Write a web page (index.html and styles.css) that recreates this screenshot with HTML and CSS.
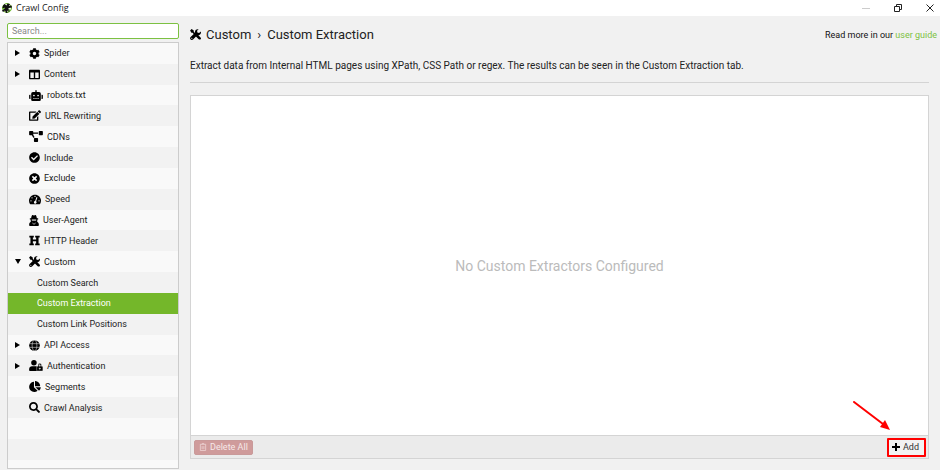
FILE: index.html
```
<!DOCTYPE html>
<html lang="en">
<head>
    <meta charset="UTF-8">
    <meta name="viewport" content="width=device-width, initial-scale=1.0">
    <title>Crawl Config</title>
    <link rel="stylesheet" href="styles.css">
</head>
<body>
    <svg class="sprite" aria-hidden="true">
        <symbol id="tools" viewBox="0 0 512 512">
            <path d="M5 75L75 5l100 70v55l115 110-60 60L120 175H65z"/>
            <path d="M300 280l60-20 130 130c28 28 28 60 5 85s-65 25-90 0L275 345z"/>
            <path d="M503 115c22 70-8 135-68 160-30 14-60 14-85 8L140 490c-32 30-80 30-112 0s-30-80 2-112l205-205c-12-55 5-105 40-140C315 8 360 0 404 12l-75 75 14 80 80 14z"/>
            <circle class="hole" cx="84" cy="432" r="26"/>
        </symbol>
    </svg>

    <div class="window">
        <header class="titlebar">
            <svg class="logo" viewBox="0 0 20 20">
                <circle cx="10" cy="10" r="9" fill="#eef6e6" stroke="#6cb52d" stroke-width="2"/>
                <path d="M2 5l3-3 4 3 2-4 5 1-2 4 5-1 1 4-6 1-2 2 4 2-2 4-4-3 1 5h-3l-2-5-4 3-2-3 5-4-4-1z" fill="#111"/>
                <path d="M2 12l4-2M12 17l4-4" stroke="#6cb52d" stroke-width="2"/>
            </svg>
            <span class="title">Crawl Config</span>
            <div class="window-controls">
                <button aria-label="Minimize"><svg viewBox="0 0 8 8"><path d="M0 4.500h8" stroke="#ccc"/></svg></button>
                <button aria-label="Restore"><svg viewBox="0 0 8 8"><path d="M.5 2.500h5v5h-5zM2.500 2.500v-2h5v5h-2" stroke="#222"/></svg></button>
                <button aria-label="Close"><svg viewBox="0 0 8 8"><path d="M.5.5l7 7m0-7l-7 7" stroke="#222"/></svg></button>
            </div>
        </header>

        <div class="content">
            <aside class="sidebar">
                <input class="search" type="text" placeholder="Search..." aria-label="Search">
                <ul class="tree">
                    <li>
                        <span class="arrow"></span>
                        <svg class="icon" viewBox="0 0 512 512"><path d="M487.4 315.7l-42.6-24.6c4.3-23.2 4.3-47 0-70.2l42.6-24.6c4.9-2.8 7.1-8.6 5.5-14-11.1-35.6-30-67.8-54.7-94.6-3.8-4.1-10-5.1-14.8-2.3L380.8 110c-17.9-15.4-38.5-27.3-60.8-35.1V25.8c0-5.6-3.9-10.5-9.4-11.7-36.7-8.2-74.3-7.8-109.2 0-5.5 1.2-9.4 6.1-9.4 11.7V75c-22.2 7.9-42.8 19.8-60.8 35.1L88.7 85.5c-4.9-2.8-11-1.9-14.8 2.3-24.7 26.7-43.6 58.9-54.7 94.6-1.7 5.4.6 11.2 5.5 14L67.3 221c-4.3 23.2-4.3 47 0 70.2l-42.6 24.6c-4.9 2.8-7.1 8.6-5.5 14 11.1 35.6 30 67.8 54.7 94.6 3.8 4.1 10 5.1 14.8 2.3l42.6-24.6c17.9 15.4 38.5 27.3 60.8 35.1v49.2c0 5.6 3.9 10.5 9.4 11.7 36.7 8.2 74.3 7.8 109.2 0 5.5-1.2 9.4-6.1 9.4-11.7v-49.2c22.2-7.9 42.8-19.8 60.8-35.1l42.6 24.6c4.9 2.8 11 1.9 14.8-2.3 24.7-26.7 43.6-58.9 54.7-94.6 1.5-5.5-.7-11.3-5.6-14.1zM256 336c-44.1 0-80-35.9-80-80s35.9-80 80-80 80 35.9 80 80-35.9 80-80 80z"/></svg>
                        <span>Spider</span>
                    </li>
                    <li>
                        <span class="arrow"></span>
                        <svg class="icon" viewBox="0 0 512 512"><path d="M464 32H48C21.500 32 0 53.500 0 80v352c0 26.500 21.500 48 48 48h416c26.500 0 48-21.500 48-48V80c0-26.500-21.500-48-48-48zM224 416H64V160h160v256zm224 0H288V160h160v256z"/></svg>
                        <span>Content</span>
                    </li>
                    <li>
                        <svg class="icon wide" viewBox="0 0 640 512"><path d="M32,224H64V416H32A32,32,0,0,1,0,384V256A32,32,0,0,1,32,224Zm512-48V448a64,64,0,0,1-64,64H160a64,64,0,0,1-64-64V176a80,80,0,0,1,80-80H288V32a32,32,0,0,1,64,0V96H464A80,80,0,0,1,544,176ZM264,256a40,40,0,1,0-40,40A40,40,0,0,0,264,256Zm-8,128H192v32h64Zm96,0H288v32h64ZM456,256a40,40,0,1,0-40,40A40,40,0,0,0,456,256Zm-8,128H384v32h64ZM640,256V384a32,32,0,0,1-32,32H576V224h32A32,32,0,0,1,640,256Z"/></svg>
                        <span>robots.txt</span>
                    </li>
                    <li>
                        <svg class="icon medium" viewBox="0 0 576 512"><path d="M402.6 83.2l90.2 90.2c3.8 3.8 3.8 10 0 13.8L274.4 405.6l-92.8 10.3c-12.4 1.4-22.9-9.1-21.5-21.5l10.3-92.8L388.8 83.2c3.8-3.8 10-3.8 13.8 0zm162-22.9l-48.8-48.8c-15.2-15.2-39.9-15.2-55.2 0l-35.4 35.4c-3.8 3.8-3.8 10 0 13.8l90.2 90.2c3.8 3.8 10 3.8 13.8 0l35.4-35.4c15.2-15.3 15.2-40 0-55.2zM384 346.2V448H64V128h229.8c3.2 0 6.2-1.3 8.5-3.5l40-40c7.6-7.6 2.2-20.5-8.5-20.5H48C21.5 64 0 85.5 0 112v352c0 26.5 21.5 48 48 48h352c26.5 0 48-21.5 48-48V306.2c0-10.7-12.9-16-20.5-8.5l-40 40c-2.2 2.3-3.5 5.3-3.5 8.5z"/></svg>
                        <span>URL Rewriting</span>
                    </li>
                    <li>
                        <svg class="icon wide" viewBox="0 0 640 512"><path d="M384 320H256c-17.67 0-32 14.33-32 32v128c0 17.67 14.33 32 32 32h128c17.67 0 32-14.33 32-32V352c0-17.67-14.33-32-32-32zM192 32c0-17.67-14.33-32-32-32H32C14.33 0 0 14.33 0 32v128c0 17.67 14.33 32 32 32h95.72l73.16 128.04C211.98 300.98 232.4 288 256 288h.28L192 175.51V128h224V64H192V32zM608 0H480c-17.67 0-32 14.33-32 32v128c0 17.67 14.33 32 32 32h128c17.67 0 32-14.33 32-32V32c0-17.67-14.33-32-32-32z"/></svg>
                        <span>CDNs</span>
                    </li>
                    <li>
                        <svg class="icon" viewBox="0 0 512 512"><path d="M504 256c0 137-111 248-248 248S8 393 8 256 119 8 256 8s248 111 248 248zM227.300 387.300l184-184c6.200-6.200 6.200-16.400 0-22.600l-22.600-22.600c-6.200-6.200-16.400-6.200-22.600 0L216 308.100l-70-70c-6.200-6.200-16.400-6.200-22.600 0l-22.600 22.600c-6.200 6.200-6.200 16.400 0 22.600l104 104c6.200 6.200 16.400 6.200 22.500 0z"/></svg>
                        <span>Include</span>
                    </li>
                    <li>
                        <svg class="icon" viewBox="0 0 512 512"><path d="M256 8C119 8 8 119 8 256s111 248 248 248 248-111 248-248S393 8 256 8zm121.6 313.1c4.700 4.700 4.700 12.300 0 17L338 377.600c-4.700 4.700-12.300 4.700-17 0L256 312l-65.100 65.600c-4.700 4.700-12.300 4.700-17 0L134.400 338c-4.700-4.700-4.700-12.300 0-17l65.600-65-65.600-65.100c-4.700-4.700-4.700-12.300 0-17l39.600-39.600c4.700-4.700 12.300-4.700 17 0l65 65.700 65.100-65.600c4.700-4.700 12.300-4.700 17 0l39.600 39.600c4.700 4.700 4.700 12.300 0 17L312 256l65.600 65.100z"/></svg>
                        <span>Exclude</span>
                    </li>
                    <li>
                        <svg class="icon medium" viewBox="0 0 576 512">
                            <path d="M288 32C129 32 0 161 0 320c0 53 14 102 39 145 6 9 16 15 27 15h444c11 0 21-6 27-15 25-43 39-92 39-145C576 161 447 32 288 32z"/>
                            <g class="hole"><circle cx="288" cy="110" r="30"/><circle cx="145" cy="175" r="30"/><circle cx="95" cy="320" r="30"/><circle cx="481" cy="320" r="30"/><path d="M360 140l45 15-65 190a64 64 0 1 1-45-15z"/></g>
                        </svg>
                        <span>Speed</span>
                    </li>
                    <li>
                        <svg class="icon narrow" viewBox="0 0 448 512">
                            <path d="M30 150h60c10-60 30-125 56-145 20-9 52 16 78 16S286-4 302 5c26 20 46 85 56 145h60v60h-40v80l-10 20c46 28 80 58 80 112v58c0 18-14 32-32 32H32c-18 0-32-14-32-32v-58c0-54 34-84 80-112l-10-20v-80H30z"/>
                            <path class="hole" d="M120 205h208v40c-30 28-75 24-104-5-29 29-74 33-104 5zM150 350l50 30-10 80zM298 350l-50 30 10 80z"/>
                        </svg>
                        <span>User-Agent</span>
                    </li>
                    <li>
                        <svg class="icon" viewBox="0 0 512 512"><path d="M16 40h208v76h-44v96h152v-96h-44V40h208v76h-52v280h52v76H288v-76h44V296H180v100h44v76H16v-76h52V116H16z"/></svg>
                        <span>HTTP Header</span>
                    </li>
                    <li>
                        <span class="arrow open"></span>
                        <svg class="icon"><use href="#tools"/></svg>
                        <span>Custom</span>
                    </li>
                    <li class="child">Custom Search</li>
                    <li class="child selected">Custom Extraction</li>
                    <li class="child">Custom Link Positions</li>
                    <li>
                        <span class="arrow"></span>
                        <svg class="icon" viewBox="0 0 512 512">
                            <circle cx="256" cy="256" r="248"/>
                            <g class="grid-lines"><ellipse cx="256" cy="256" rx="110" ry="248"/><path d="M8 170h496M8 342h496"/></g>
                        </svg>
                        <span>API Access</span>
                    </li>
                    <li>
                        <span class="arrow"></span>
                        <svg class="icon wide" viewBox="0 0 640 512">
                            <circle cx="224" cy="128" r="128"/>
                            <path d="M0 422c0-74 60-134 134-134h180c30 0 58 10 80 27v197H48c-26 0-48-22-48-48z"/>
                            <path d="M416 288v-48c0-50 38-84 80-84s80 34 80 84v48h32c18 0 32 14 32 32v160c0 18-14 32-32 32H384c-18 0-32-14-32-32V320c0-18 14-32 32-32zm56 0h48v-48c0-36-48-36-48 0zm24 80a32 32 0 1 0 0 64 32 32 0 0 0 0-64z" fill-rule="evenodd" stroke="#f2f2f2" stroke-width="18"/>
                        </svg>
                        <span>Authentication</span>
                    </li>
                    <li>
                        <svg class="icon medium" viewBox="0 0 544 512"><path d="M528 288H290l158 158c6 6 16 7 22 1 39-36 65-86 72-143 1-9-6-16-14-16zM512 224C504 103 409 8 288 0c-9-1-16 7-16 16v224h224c9 0 17-7 16-16zM224 288V50c0-9-7-16-16-14C87 53-5 158 0 283c5 129 114 231 243 229 51-1 97-17 136-44 8-6 9-18 2-25z"/></svg>
                        <span>Segments</span>
                    </li>
                    <li>
                        <svg class="icon" viewBox="0 0 512 512"><path d="M505 442.7L405.3 343c-4.5-4.5-10.6-7-17-7H372c27.6-35.3 44-79.7 44-128C416 93.1 322.900 0 208 0S0 93.100 0 208s93.100 208 208 208c48.300 0 92.700-16.400 128-44v16.300c0 6.400 2.500 12.500 7 17l99.700 99.700c9.400 9.400 24.600 9.400 33.900 0l28.300-28.300c9.400-9.400 9.400-24.600.1-34zM208 336c-70.700 0-128-57.200-128-128 0-70.700 57.200-128 128-128 70.700 0 128 57.200 128 128 0 70.700-57.200 128-128 128z"/></svg>
                        <span>Crawl Analysis</span>
                    </li>
                    <li></li>
                    <li></li>
                    <li></li>
                </ul>
            </aside>

            <main class="main">
                <div class="heading">
                    <svg class="icon"><use href="#tools"/></svg>
                    <h1><span>Custom</span><span>›</span><span>Custom Extraction</span></h1>
                    <p class="guide">Read more in our <a href="#">user guide</a></p>
                </div>
                <p class="description">Extract data from Internal HTML pages using XPath, CSS Path or regex. The results can be seen in the Custom Extraction tab.</p>

                <section class="panel">
                    <div class="empty">No Custom Extractors Configured</div>
                    <div class="toolbar">
                        <button class="delete" disabled>
                            <svg viewBox="0 0 8 9"><path d="M.5 1.500h7M3 1V.5h2V1M1 2v6.500h6V2M3 3.500v3.500M5 3.500v3.500"/></svg>
                            Delete All
                        </button>
                        <div class="add-wrap">
                            <button class="add">
                                <svg viewBox="0 0 8 8"><path d="M4 0v8M0 4h8"/></svg>
                                Add
                            </button>
                            <svg class="pointer" viewBox="0 0 38 30">
                                <path d="M1 1l29 22" stroke="#f00" stroke-width="2" stroke-linecap="round"/>
                                <path d="M37 29l-10-3 5-7z" fill="#f00"/>
                            </svg>
                        </div>
                    </div>
                </section>
            </main>
        </div>
    </div>
</body>
</html>
```
FILE: styles.css
```
* {
    box-sizing: border-box;
}
body {
    margin: 0;
    font-family: Roboto, sans-serif;
    font-size: 9px;
    color: #222;
    background-color: #f1f1f1;
}
h1, p, ul {
    margin: 0;
    padding: 0;
}
button, input {
    font: inherit;
}
.sprite {
    position: absolute;
    width: 0;
    height: 0;
}
.window {
    display: flex;
    flex-direction: column;
    height: 100vh;
}

/* Title bar */
.titlebar {
    display: flex;
    align-items: center;
    height: 16px;
    padding: 0 6px 0 2px;
    background: #fff;
}
.logo {
    width: 10px;
    height: 10px;
    margin-right: 4px;
}
.title {
    font-family: "Open Sans", sans-serif;
    line-height: 16px;
}
.window-controls {
    display: flex;
    gap: 24px;
    margin-left: auto;
}
.window-controls button {
    display: flex;
    padding: 0;
    border: none;
    background: none;
}
.window-controls svg {
    width: 8px;
    height: 8px;
    fill: none;
}

.content {
    display: flex;
    flex: 1;
    min-height: 0;
}

/* Sidebar */
.sidebar {
    display: flex;
    flex-direction: column;
    gap: 3px;
    width: 172px;
    margin: 7px 11px 1px 7px;
}
.search {
    width: 100%;
    height: 16px;
    padding: 0 4px;
    border: 1px solid #7cc142;
    border-radius: 2px;
    outline: none;
    background: #fff;
}
.search::placeholder {
    color: #888;
}
.tree {
    display: grid;
    grid-template-rows: repeat(20, 20fr) 8fr;
    flex: 1;
    min-height: 0;
    border: 1px solid #ccc;
    list-style: none;
}
.tree li {
    position: relative;
    display: flex;
    align-items: center;
    gap: 4px;
    min-height: 0;
    padding-left: 21px;
    line-height: 12px;
    background: #f9f9f9;
}
.tree li:nth-child(even) {
    background: #f2f2f2;
}
.tree .child {
    padding-left: 29px;
}
.tree .selected {
    color: #fff;
    background: #74b72a;
}
.arrow {
    position: absolute;
    left: 7px;
    border-left: 5px solid #000;
    border-top: 3px solid transparent;
    border-bottom: 3px solid transparent;
}
.arrow.open {
    border-left: 3px solid transparent;
    border-right: 3px solid transparent;
    border-top: 5px solid #000;
    border-bottom: none;
}
.icon {
    width: 11px;
    height: 11px;
    fill: #000;
}
.icon.narrow {
    width: 10px;
}
.icon.medium {
    width: 12px;
}
.icon.wide {
    width: 14px;
}
.hole {
    fill: #f5f5f5;
}
.grid-lines {
    fill: none;
    stroke: #f5f5f5;
    stroke-width: 24px;
}

/* Main area */
.main {
    display: flex;
    flex: 1;
    flex-direction: column;
    min-width: 0;
    padding: 8px 11px 11px 0;
}
.heading {
    display: flex;
    align-items: center;
    gap: 5px;
    height: 21px;
    margin-right: -8px;
}
.heading h1 {
    display: flex;
    gap: 6px;
    font-size: 13px;
    font-weight: 400;
    line-height: 20px;
}
.guide {
    margin-left: auto;
    line-height: 12px;
    color: #111;
}
.guide a {
    color: #7cc142;
    text-decoration: none;
}
.description {
    padding: 13px 0 8px;
    font-size: 10px;
    line-height: 16px;
    border-bottom: 1px solid #d4d4d4;
}
.panel {
    display: flex;
    flex: 1;
    flex-direction: column;
    margin-top: 12px;
    border: 1px solid #d4d4d4;
    background: #fff;
}
.empty {
    display: flex;
    flex: 1;
    align-items: center;
    justify-content: center;
    font-size: 14px;
    color: #bbb;
}
.toolbar {
    display: flex;
    align-items: center;
    justify-content: space-between;
    height: 23px;
    padding: 0 2px 0 3px;
    border-top: 1px solid #d4d4d4;
    background: #ebebeb;
}
.toolbar button {
    display: flex;
    align-items: center;
    gap: 3px;
    border-radius: 2px;
}
.toolbar button svg {
    width: 8px;
    height: 8px;
    fill: none;
}
.delete {
    height: 15px;
    padding: 0 4px;
    border: 1px solid #c99a9a;
    color: #f6e8e8;
    background: #cf9b9b;
}
.delete svg {
    stroke: #ecd0d0;
}
.add-wrap {
    position: relative;
}
.toolbar .add {
    height: 19px;
    padding: 0 5px 0 3px;
    border: 2px solid #f00;
    border-radius: 1px;
    color: #333;
    background: #f3f3f3;
}
.add svg {
    stroke: #000;
    stroke-width: 2px;
}
.pointer {
    position: absolute;
    right: 35px;
    bottom: 26px;
    width: 38px;
    height: 30px;
    fill: none;
}
```
